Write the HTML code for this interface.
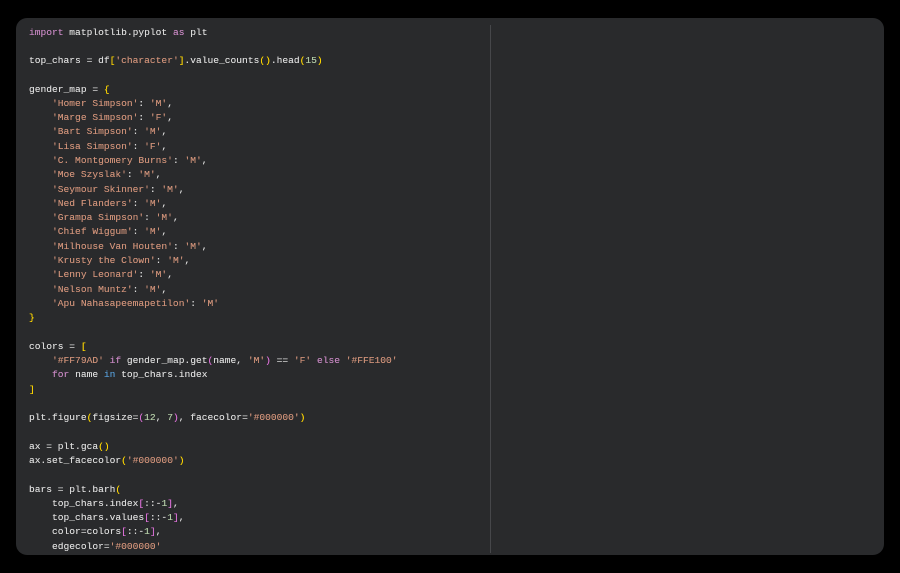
<!DOCTYPE html>
<html><head><meta charset="utf-8"><style>
html,body{margin:0;padding:0;background:#000;width:900px;height:573px;overflow:hidden}
.panel{position:absolute;left:16px;top:18px;width:868px;height:537px;background:#292a2c;border-radius:11px}
.div{position:absolute;left:474px;top:7px;width:1px;height:528px;background:#46474a}
pre{position:absolute;left:13px;top:7.5px;margin:0;font-family:"Liberation Mono",monospace;font-size:9.6px;line-height:14.28px;color:#dcdcdc;text-shadow:0 0 0.3px currentColor}
.k{color:#c586c0}.s{color:#ce9178}.y{color:#ffd700}.p{color:#da70d6}.n{color:#b5cea8}.b{color:#569cd6}
</style></head><body><div class="panel"><div class="div"></div><pre><span class="k">import</span> matplotlib.pyplot <span class="k">as</span> plt

top_chars = df<span class="y">[</span><span class="s">'character'</span><span class="y">]</span>.value_counts<span class="y">()</span>.head<span class="y">(</span><span class="n">15</span><span class="y">)</span>

gender_map = <span class="y">{</span>
    <span class="s">'Homer Simpson'</span>: <span class="s">'M'</span>,
    <span class="s">'Marge Simpson'</span>: <span class="s">'F'</span>,
    <span class="s">'Bart Simpson'</span>: <span class="s">'M'</span>,
    <span class="s">'Lisa Simpson'</span>: <span class="s">'F'</span>,
    <span class="s">'C. Montgomery Burns'</span>: <span class="s">'M'</span>,
    <span class="s">'Moe Szyslak'</span>: <span class="s">'M'</span>,
    <span class="s">'Seymour Skinner'</span>: <span class="s">'M'</span>,
    <span class="s">'Ned Flanders'</span>: <span class="s">'M'</span>,
    <span class="s">'Grampa Simpson'</span>: <span class="s">'M'</span>,
    <span class="s">'Chief Wiggum'</span>: <span class="s">'M'</span>,
    <span class="s">'Milhouse Van Houten'</span>: <span class="s">'M'</span>,
    <span class="s">'Krusty the Clown'</span>: <span class="s">'M'</span>,
    <span class="s">'Lenny Leonard'</span>: <span class="s">'M'</span>,
    <span class="s">'Nelson Muntz'</span>: <span class="s">'M'</span>,
    <span class="s">'Apu Nahasapeemapetilon'</span>: <span class="s">'M'</span>
<span class="y">}</span>

colors = <span class="y">[</span>
    <span class="s">'#FF79AD'</span> <span class="k">if</span> gender_map.get<span class="p">(</span>name, <span class="s">'M'</span><span class="p">)</span> == <span class="s">'F'</span> <span class="k">else</span> <span class="s">'#FFE100'</span>
    <span class="k">for</span> name <span class="b">in</span> top_chars.index
<span class="y">]</span>

plt.figure<span class="y">(</span>figsize=<span class="p">(</span><span class="n">12</span>, <span class="n">7</span><span class="p">)</span>, facecolor=<span class="s">'#000000'</span><span class="y">)</span>

ax = plt.gca<span class="y">()</span>
ax.set_facecolor<span class="y">(</span><span class="s">'#000000'</span><span class="y">)</span>

bars = plt.barh<span class="y">(</span>
    top_chars.index<span class="p">[</span>::-<span class="n">1</span><span class="p">]</span>,
    top_chars.values<span class="p">[</span>::-<span class="n">1</span><span class="p">]</span>,
    color=colors<span class="p">[</span>::-<span class="n">1</span><span class="p">]</span>,
    edgecolor=<span class="s">'#000000'</span></pre></div></body></html>
